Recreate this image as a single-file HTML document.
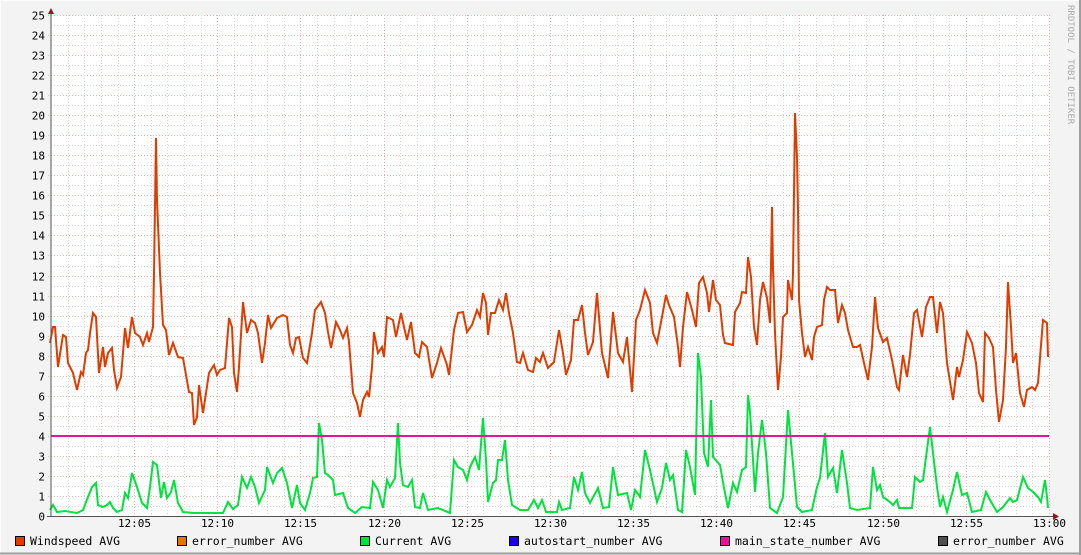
<!DOCTYPE html>
<html><head><meta charset="utf-8"><style>
html,body{margin:0;padding:0;background:#f3f3f3;}
svg{display:block;}
text{font-family:"DejaVu Sans Mono","Liberation Mono",monospace;}
</style></head><body>
<svg id="s" width="1081" height="555" xmlns="http://www.w3.org/2000/svg">
<rect x="0" y="0" width="1081" height="555" fill="#f3f3f3"/>
<line x1="0" y1="0.5" x2="1081" y2="0.5" stroke="#fcfcfc"/>
<line x1="0.5" y1="0" x2="0.5" y2="555" stroke="#fcfcfc"/>
<line x1="0" y1="553.5" x2="1081" y2="553.5" stroke="#9e9e9e" stroke-width="2"/>
<line x1="1080" y1="0" x2="1080" y2="555" stroke="#9e9e9e" stroke-width="2"/>
<rect x="51" y="15" width="998" height="501" fill="#ffffff"/>
<g id="grid"></g>
<g id="lbl" font-size="11" fill="#000"></g>
<polyline fill="none" stroke="#00e23c" stroke-width="2" stroke-linejoin="miter" points="50,510 53,505 57,512 65,511 77,513 83,510 88,497 92,487 96,483 98,505 103,507 107,505 110,502 113,508 117,512 122,510 125,493 128,498 132,473 137,487 142,503 147,508 150,487 153,462 157,465 161,498 164,482 167,498 171,492 174,480 178,503 183,512 193,513 207,513 223,513 228,502 233,509 238,505 242,477 247,488 251,477 255,487 259,503 265,490 267,467 273,483 277,473 282,468 287,483 292,508 297,485 300,503 305,510 310,493 313,478 317,477 319,423 322,440 325,473 328,475 333,480 335,495 343,493 348,508 355,513 362,507 370,508 373,482 378,490 383,508 387,480 390,487 395,478 398,423 400,463 403,485 408,487 412,480 415,507 420,508 423,493 428,510 438,508 450,513 454,460 458,467 463,470 467,480 470,467 475,457 479,470 483,418 486,460 488,502 493,483 496,480 498,460 502,460 505,440 508,480 512,505 520,510 528,510 534,500 538,508 542,500 546,512 557,512 559,502 562,510 570,508 574,477 578,490 582,472 585,493 590,503 598,488 603,508 609,507 613,467 618,495 627,493 631,510 635,490 640,497 645,450 650,470 657,502 662,488 666,463 670,480 673,475 678,510 682,512 686,450 690,467 695,495 698,353 701,377 704,453 708,467 711,400 713,457 720,465 724,488 728,508 733,483 737,492 742,470 746,467 748,395 750,412 755,492 758,453 762,420 766,453 770,508 777,513 783,497 788,410 792,453 797,507 802,512 812,510 817,487 820,478 825,433 828,477 833,468 837,493 842,450 847,483 850,508 857,510 870,508 873,467 877,490 880,485 883,497 890,502 893,505 897,500 899,508 912,508 915,477 920,482 923,480 930,427 933,453 937,487 940,507 943,497 947,512 953,490 957,472 962,495 967,493 972,512 981,510 986,492 990,500 997,512 1003,507 1010,498 1013,502 1017,500 1023,477 1028,488 1033,492 1038,497 1041,502 1045,480 1047,497 1048,508"/>
<line x1="51" y1="436" x2="1049" y2="436" stroke="#e0169b" stroke-width="2"/>
<polyline fill="none" stroke="#e03c00" stroke-width="2" points="50,343 53,327 55,327 58,367 63,335 66,337 68,363 73,373 77,390 81,372 83,375 86,353 88,350 90,333 93,313 96,317 99,373 103,347 105,367 108,353 112,348 114,370 117,388 121,377 125,328 128,348 132,317 135,333 140,337 143,345 147,333 149,342 153,327 154,273 156,138 157,200 160,273 163,325 166,330 169,355 173,343 178,357 183,358 189,392 192,393 194,425 197,417 199,385 203,413 209,373 214,365 217,375 220,370 225,368 229,318 232,327 234,373 237,392 239,367 243,302 247,333 251,320 255,323 258,333 262,363 265,343 268,315 271,328 277,318 283,315 287,317 290,345 293,353 296,338 299,337 303,358 307,363 312,333 315,310 321,302 325,313 328,332 331,348 336,322 340,330 343,338 347,328 349,342 353,393 357,403 360,417 363,400 367,392 369,397 372,367 374,332 378,353 382,347 384,357 387,317 393,320 396,337 401,313 404,327 407,340 411,322 415,353 419,357 422,342 427,347 432,378 437,363 441,348 447,365 449,375 454,330 458,313 463,312 467,332 472,325 477,310 480,317 483,293 486,303 488,335 491,313 495,313 499,300 503,310 506,293 509,313 513,333 517,362 520,363 523,353 528,370 533,372 536,358 540,362 543,353 548,368 554,362 559,330 563,353 566,375 571,360 574,320 578,320 582,305 585,333 588,355 593,342 597,293 602,353 608,378 613,312 618,353 623,362 627,337 632,392 636,320 640,310 645,290 650,303 653,333 657,343 662,317 666,295 669,305 674,317 678,347 680,367 683,327 687,292 692,310 696,327 699,283 703,277 707,293 709,312 713,280 716,300 720,305 723,335 725,343 733,345 735,312 740,303 742,292 746,293 748,257 751,277 754,327 757,345 760,300 763,282 767,298 770,323 772,207 773,268 775,333 778,390 781,357 783,317 787,313 788,280 792,300 793,273 795,113 797,157 798,210 799,300 802,333 805,357 808,347 812,360 814,337 817,327 822,325 824,300 827,287 830,290 835,290 838,323 842,305 845,313 848,330 853,347 857,347 860,345 864,363 868,380 872,347 875,297 878,328 883,342 887,338 892,360 897,387 899,390 903,355 907,377 910,355 914,313 917,310 922,337 926,307 930,297 933,297 937,333 940,302 943,313 947,363 953,400 957,367 959,377 963,360 967,332 972,343 976,363 979,393 983,402 985,333 989,338 993,347 996,390 999,422 1003,400 1006,347 1008,282 1011,327 1013,363 1016,353 1020,393 1024,407 1027,390 1032,387 1035,390 1038,383 1043,320 1047,323 1048,357"/>
<line x1="51" y1="10" x2="51" y2="517" stroke="#555" stroke-width="1"/>
<line x1="47" y1="516.5" x2="1054" y2="516.5" stroke="#555" stroke-width="1"/>
<polygon points="48,14 54,14 51,8" fill="#a01010"/>
<polygon points="1053,513 1053,520 1059,516.5" fill="#a01010"/>
<g font-size="11.5">
<rect x="15.5" y="536.5" width="9" height="9" fill="#e03c00" stroke="#000"/><text x="30" y="545">Windspeed AVG</text>
<rect x="177.5" y="536.5" width="9" height="9" fill="#e07800" stroke="#000"/><text x="192" y="545">error_number AVG</text>
<rect x="360.5" y="536.5" width="9" height="9" fill="#00e23c" stroke="#000"/><text x="375" y="545">Current AVG</text>
<rect x="509.5" y="536.5" width="9" height="9" fill="#1e00e0" stroke="#000"/><text x="524" y="545">autostart_number AVG</text>
<rect x="720.5" y="536.5" width="9" height="9" fill="#e0169b" stroke="#000"/><text x="735" y="545">main_state_number AVG</text>
<rect x="938.5" y="536.5" width="9" height="9" fill="#505050" stroke="#000"/><text x="953" y="545">error_number AVG</text>
</g>
<text transform="translate(1068,5) rotate(90)" font-size="9" fill="#aaa">RRDTOOL / TOBI OETIKER</text>
</svg>
<script>
var ns="http://www.w3.org/2000/svg",g=document.getElementById("grid"),l=document.getElementById("lbl");
function ln(x1,y1,x2,y2,c){var e=document.createElementNS(ns,"line");e.setAttribute("x1",x1);e.setAttribute("y1",y1);e.setAttribute("x2",x2);e.setAttribute("y2",y2);e.setAttribute("stroke",c);e.setAttribute("stroke-dasharray","1,2");g.appendChild(e);}
function tx(x,y,s,a){var e=document.createElementNS(ns,"text");e.setAttribute("x",x);e.setAttribute("y",y);e.setAttribute("text-anchor",a);e.textContent=s;l.appendChild(e);}
for(var i=0;i<=50;i++){var y=Math.round(516-i*10.02)+0.5;if(i%2==0){ln(48,y,1049,y,"#e6b4b4");tx(45,y+4,String(i/2),"end");}else ln(51,y,1049,y,"#d8d8d8");}
for(var m=1;m<=60;m++){var x=Math.round(51+m*16.633)+0.5;if(m%5==0){ln(x,15,x,520,"#e6b4b4");var h=12+Math.floor(m/60),mm=m%60;tx(x,527,h+":"+(mm<10?"0":"")+mm,"middle");}else ln(x,15,x,518,"#d8d8d8");}
</script>
</body></html>
